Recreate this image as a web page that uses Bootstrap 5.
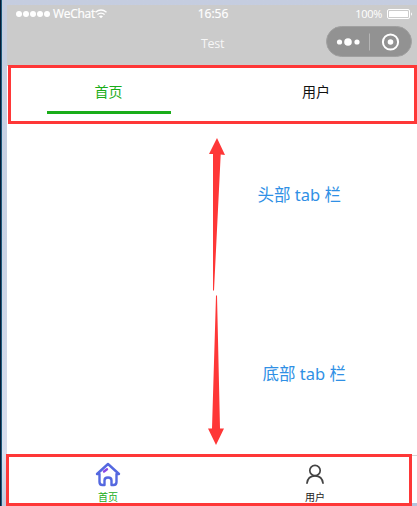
<!DOCTYPE html>
<html lang="zh-CN">
<head>
<meta charset="utf-8">
<meta name="viewport" content="width=device-width, initial-scale=1">
<title>Test</title>
<link href="https://cdn.jsdelivr.net/npm/bootstrap@5.3.0/dist/css/bootstrap.min.css" rel="stylesheet">
<style>
body{width:417px;height:506px;background:#fff;font-family:"Noto Sans","Noto Sans CJK SC",sans-serif;line-height:1}
.desk{height:506px;padding:5px 0 0 5px;border-left:2px solid #1d5b7c;background:linear-gradient(#c5cde0,#c9d3e5 50%,#d8deee 90%,#c0cbe0)}
.desk::before{content:"";position:absolute;left:0;top:0;width:1px;height:506px;background:#071b36}
.phone{background:#fff}
.top-area{height:61px;background:#cbcbcb;color:#fff}
.status{height:17px;font-family:"Open Sans","Noto Sans",sans-serif;font-size:12px;padding:0 4px 0 9px}
.status>*{flex:1 1 0}
.dots{gap:1px}
.dots i{width:6px;height:6px;border-radius:50%;background:#fff}
.carrier{margin-left:3px;letter-spacing:-.3px;-webkit-text-stroke:.2px #fff}
.clock{-webkit-text-stroke:.2px #fff;padding-right:3px}
.pct{font-size:11px;font-family:"Open Sans",sans-serif;letter-spacing:-.3px}
.title-row{height:44px}
.page-title{font-size:12.5px;letter-spacing:-.3px;opacity:.85;font-family:"Open Sans",sans-serif;padding-left:1px}
.capsule{width:86px;height:31px;top:4px;right:5px;background:#929292;border:1px solid #a0a0a0}
.tabs-top{height:58px;font-size:14px;color:#111}
.tabs-top .tab{padding:19px 0 10px}
.tabs-top .on,.tabs-bottom .on{color:#1aad19}
.tabs-top .bar{width:124px;height:3px;background:#1aad19}
.tabs-top .on{padding-right:2px}
.tabs-top .tab+.tab{padding-left:3px}
.tabs-bottom{height:51px;border-top:1px solid #d5d5d5;font-size:10px;color:#222}
.tabs-bottom .tab{padding-top:6px}
.tabs-bottom .on{padding-right:3px}
.tabs-bottom .tab+.tab{padding-left:1px}
.tabs-bottom svg{margin-bottom:5px}
.frame{border:3px solid #fe3737}
.frame-top{left:8px;top:65px;width:409px;height:59px}
.frame-bottom{left:6px;top:454px;width:406px;height:52px}
.corner{left:412px;top:503px;width:5px;height:3px;background:#b5c2dc}
.note{color:#3090e5;font-size:16.5px;white-space:nowrap}
.note-a{left:257.5px;top:187px}
.note-b{left:262.5px;top:366px}
</style>
</head>
<body class="position-relative overflow-hidden">
<div class="desk d-flex">
  <main class="phone d-flex flex-column flex-grow-1">
    <header class="top-area">
      <div class="status d-flex align-items-center">
        <div class="d-flex align-items-center">
          <span class="dots d-flex"><i></i><i></i><i></i><i></i><i></i></span>
          <span class="carrier">WeChat</span>
          <svg width="12" height="10" viewBox="0 0 12 10" fill="none" stroke="#fff" stroke-width="1.4"><path d="M.5 3.2Q6-1.2 11.5 3.2M2.4 5.5Q6 2.7 9.6 5.5"/><path d="M6 9.3 4 7.2Q6 5.7 8 7.2Z" fill="#fff" stroke="none"/></svg>
        </div>
        <div class="clock text-center">16:56</div>
        <div class="d-flex justify-content-end align-items-center">
          <span class="pct me-1">100%</span>
          <svg width="27" height="10" viewBox="0 0 27 10"><rect x="1.5" y=".5" width="22" height="9" rx="1.5" fill="none" stroke="#fff"/><rect x="3" y="2" width="19" height="6" rx=".5" fill="#fff"/><path d="M25 3.2Q27 5 25 6.8Z" fill="#fff"/></svg>
        </div>
      </div>
      <div class="title-row d-grid position-relative">
        <div class="page-title text-center align-self-center">Test</div>
        <div class="capsule rounded-pill position-absolute">
          <svg class="d-block" width="84" height="29" viewBox="0 0 84 29"><g fill="#fff"><circle cx="12.5" cy="15" r="2.6"/><circle cx="21" cy="15" r="3.8"/><circle cx="30" cy="15" r="2.6"/><circle cx="63.5" cy="15" r="2.8"/></g><path d="M42.500 6.500v17" stroke="#b5b5b5"/><circle cx="63.5" cy="15" r="7.6" fill="none" stroke="#fff" stroke-width="2"/></svg>
        </div>
      </div>
    </header>
    <nav class="tabs-top d-flex">
      <div class="tab on w-50 d-flex flex-column align-items-center justify-content-between"><span>首页</span><span class="bar"></span></div>
      <div class="tab w-50 text-center">用户</div>
    </nav>
    <section class="flex-grow-1"></section>
    <nav class="tabs-bottom d-flex">
      <div class="tab on w-50 d-flex flex-column align-items-center">
        <svg width="26" height="25" viewBox="0 0 26 25" fill="none" stroke="#5468e0" stroke-width="2.4" stroke-linecap="round" stroke-linejoin="round"><path d="M4.500 12H2L13 2 24 12H21.500V20Q21.500 23 18.500 23H16.500V18.500Q16.500 15.500 13 15.500T9.500 18.500V23H7.500Q4.500 23 4.500 20Z"/><path d="M9 9.500 12 7.200" stroke="#8a48e5"/></svg>
        <span>首页</span>
      </div>
      <div class="tab w-50 d-flex flex-column align-items-center">
        <svg width="20" height="25" viewBox="0 0 20 25" fill="none" stroke="#444" stroke-width="1.7" stroke-linecap="round"><circle cx="10" cy="8.5" r="5.2"/><path d="M2 21.200Q2.800 13.800 10 13.800T18 21.200"/></svg>
        <span>用户</span>
      </div>
    </nav>
  </main>
</div>
<div class="frame frame-top position-absolute"></div>
<div class="corner position-absolute"></div>
<div class="frame frame-bottom position-absolute"></div>
<svg class="position-absolute top-0 start-0" width="417" height="506" viewBox="0 0 417 506" fill="#fe3737"><path d="M217 138 225 155 220.700 154.500 214 290.500H213V154H209Z"/><path d="M216 295.500H217L220 428.500H224L216 445 208 428.500H212Z"/></svg>
<div class="note note-a position-absolute">头部 tab 栏</div>
<div class="note note-b position-absolute">底部 tab 栏</div>
<script src="https://cdn.jsdelivr.net/npm/bootstrap@5.3.0/dist/js/bootstrap.bundle.min.js"></script>
</body>
</html>
